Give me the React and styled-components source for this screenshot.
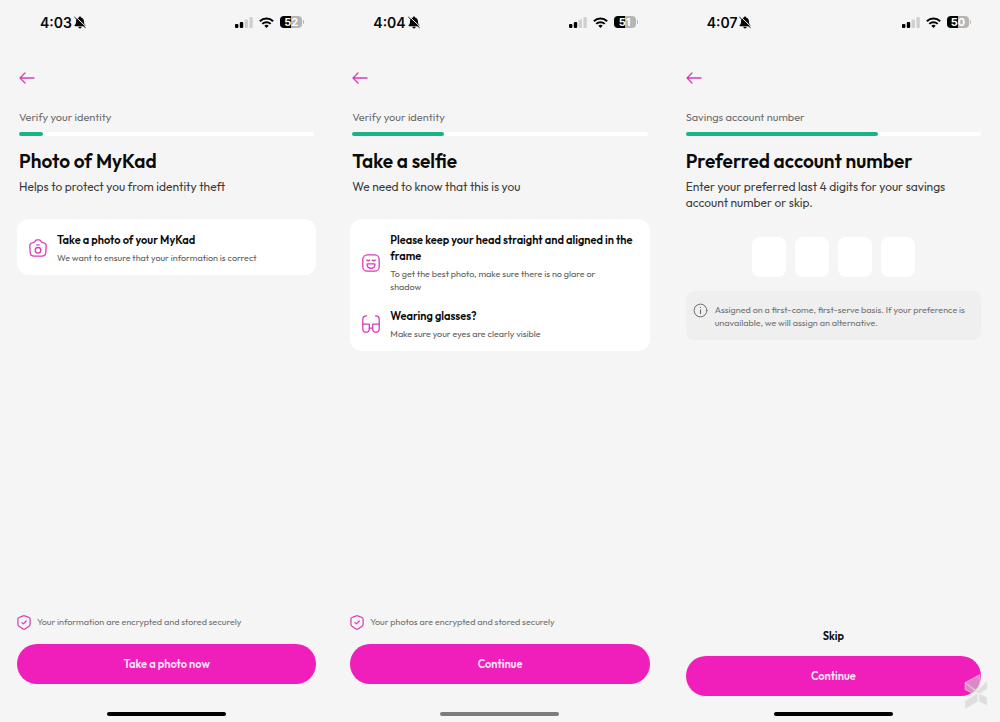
import React from 'react';
import styled, { createGlobalStyle } from 'styled-components';

const GlobalStyle = createGlobalStyle`
  * {
    box-sizing: border-box;
  }

  body {
    margin: 0;
    background: #f5f5f5;
    color: #0a0a0a;
    font-family: Outfit, Lato, sans-serif;
  }

  h1, h2, p {
    margin: 0;
  }

  button {
    font-family: inherit;
    border: 0;
    cursor: pointer;
  }
`;

const Screens = styled.main`
  position: relative;
  display: grid;
  grid-template-columns: repeat(3, 1fr);
  min-height: 100vh;

  @media (max-width: 720px) {
    grid-template-columns: 1fr;
  }
`;

const Screen = styled.section`
  display: flex;
  flex-direction: column;
  min-height: 100vh;
  padding: 0 19px 6px;
`;

const StatusBar = styled.div`
  display: flex;
  align-items: center;
  justify-content: space-between;
  height: 44px;
  padding: 0 10px 0 21px;
`;

const StatusGroup = styled.div`
  display: flex;
  align-items: center;
  gap: ${({ $gap }) => $gap};
`;

const Time = styled.span`
  font-family: Inter, sans-serif;
  font-size: 14px;
  font-weight: 600;
`;

const BackButton = styled.button`
  display: flex;
  align-items: center;
  align-self: flex-start;
  height: 24px;
  margin-top: 22px;
  padding: 0;
  background: none;
  color: #d63cb8;
`;

const StepLabel = styled.p`
  margin-top: 19px;
  font-size: 11px;
  line-height: 16px;
  color: #6f6f6f;
`;

const Track = styled.div`
  height: 4px;
  margin-top: 7px;
  border-radius: 2px;
  background: #fff;
`;

const Fill = styled.div`
  height: 100%;
  border-radius: 2px;
  background: #1bb287;
`;

const Title = styled.h1`
  margin-top: 13px;
  font-size: 19px;
  line-height: 24px;
  font-weight: 600;
`;

const Subtitle = styled.p`
  margin-top: 6px;
  font-size: 12px;
  line-height: 16px;
  color: #3c3c3c;
`;

const Card = styled.div`
  display: flex;
  flex-direction: column;
  gap: 15px;
  margin: 24px -2px 0;
  padding: 13px 12px 11px;
  border-radius: 12px;
  background: #fff;
`;

const Tip = styled.div`
  display: flex;
  align-items: center;
  gap: 10px;
  color: #d63cb8;

  svg {
    flex: none;
  }
`;

const TipTitle = styled.h2`
  font-size: 11px;
  line-height: 16px;
  font-weight: 600;
  color: #0a0a0a;
`;

const TipText = styled.p`
  margin-top: 3px;
  padding-right: 16px;
  font-size: 9px;
  line-height: 13px;
  color: #5a5a5a;
`;

const Digits = styled.div`
  display: flex;
  justify-content: center;
  gap: 9px;
  margin-top: 26px;
`;

const Digit = styled.input`
  width: 34px;
  height: 40px;
  padding: 0;
  border: 0;
  border-radius: 8px;
  background: #fff;
  font: inherit;
  font-size: 20px;
  text-align: center;
`;

const Notice = styled.div`
  display: flex;
  gap: 7px;
  margin-top: 14px;
  padding: 12px 7px 11px;
  border-radius: 8px;
  background: #efefef;
  color: #6f6f6f;

  svg {
    flex: none;
  }
`;

const NoticeText = styled.p`
  font-size: 9px;
  line-height: 13px;
`;

const Footer = styled.footer`
  display: flex;
  flex-direction: column;
  margin: auto ${({ $wide }) => ($wide ? '-2px' : '0')} 0;
`;

const Secure = styled.p`
  display: flex;
  align-items: center;
  gap: 6px;
  margin-bottom: 14px;
  font-size: 9px;
  line-height: 16px;
  color: #6f6f6f;

  svg {
    color: #d63cb8;
  }
`;

const SkipButton = styled.button`
  align-self: center;
  margin-bottom: 12px;
  padding: 0;
  background: none;
  color: #0a0a0a;
  font-size: 11px;
  line-height: 16px;
  font-weight: 600;
`;

const PrimaryButton = styled.button`
  height: 40px;
  margin-bottom: ${({ $low }) => ($low ? '16px' : '28px')};
  border-radius: 20px;
  background: #f01eba;
  color: #ffe6f8;
  font-size: 11px;
  font-weight: 600;
`;

const HomeBar = styled.div`
  align-self: center;
  width: 119px;
  height: 4px;
  border-radius: 2px;
  background: ${({ $dim }) => ($dim ? '#7c7c7c' : '#000')};
`;

const Watermark = styled.svg`
  position: absolute;
  right: 12px;
  bottom: 12px;
`;

const BellOff = () => (
  <svg width="13" height="13" viewBox="0 0 13 13">
    <path d="M6 .6c.7 0 1 .4 1.100 1 1.800.5 2.900 2 2.900 3.800 0 2.100.5 2.800 1.300 3.700.4.5.2 1.100-.4 1.100H1.100c-.6 0-.8-.6-.4-1.100C1.500 8.200 2 7.500 2 5.400c0-1.800 1.100-3.300 2.900-3.800.1-.6.4-1 1.100-1z" fill="#0a0a0a" />
    <path d="M4.300 10.800h3.400c-.2 1-.8 1.600-1.700 1.600s-1.500-.6-1.700-1.600z" fill="#0a0a0a" />
    <path d="M1.500 .7L12.300 11" stroke="#f5f5f5" strokeWidth="1" />
    <path d="M.7 1.300L11.300 11.600" stroke="#0a0a0a" strokeWidth="1" strokeLinecap="round" />
  </svg>
);

const Signal = () => (
  <svg width="18" height="11" viewBox="0 0 18 11">
    <rect x="0" y="7" width="3.400" height="4" rx="1" />
    <rect x="4.800" y="5" width="3.400" height="6" rx="1" />
    <rect x="9.600" y="2.500" width="3.400" height="8.500" rx="1" fill="#d0d0d0" />
    <rect x="14.400" y="0" width="3.400" height="11" rx="1" fill="#d0d0d0" />
  </svg>
);

const Wifi = () => (
  <svg width="15" height="11" viewBox="0 0 15 11" fill="none" stroke="#000" strokeWidth="2">
    <path d="M.9 4.200a9.400 9.400 0 0 1 13.200 0" />
    <path d="M3.300 6.900a6 6 0 0 1 8.400 0" />
    <path d="M7.500 11L5.300 8.800a3.300 3.300 0 0 1 4.400 0z" fill="#000" stroke="none" />
  </svg>
);

const BatteryShell = styled.span`
  display: flex;
  align-items: center;
  gap: 1px;

  &::after {
    content: '';
    width: 1px;
    height: 4px;
    border-radius: 0 1px 1px 0;
    background: #b5b5b5;
  }
`;

const BatteryBody = styled.span`
  width: 22px;
  height: 12px;
  border-radius: 4px;
  background: linear-gradient(90deg, #000 52%, #b5b5b5 52%);
  color: #fff;
  font-family: Inter, sans-serif;
  font-size: 11px;
  line-height: 12px;
  font-weight: 700;
  text-align: center;
`;

const ArrowLeft = () => (
  <svg width="16" height="12" viewBox="0 0 16 12" fill="none" stroke="currentColor" strokeWidth="1.300" strokeLinecap="round" strokeLinejoin="round">
    <path d="M15 6H1M6 1L1 6l5 5" />
  </svg>
);

const CameraIcon = () => (
  <svg width="18" height="18" viewBox="0 0 18 18" fill="none" stroke="currentColor" strokeWidth="1.300" strokeLinecap="round" strokeLinejoin="round">
    <path d="M4.300 3.700c.9 0 1.300-.4 1.600-1.100C6.300 1.500 6.900.9 8 .9h2c1.100 0 1.700.6 2.100 1.700.3.700.7 1.100 1.600 1.100 2.100.2 3.500 1.400 3.500 3.300l-.4 6.500c-.2 2.400-1.200 3.600-3.600 3.600H4.800c-2.400 0-3.400-1.200-3.600-3.600L.8 7c0-1.900 1.400-3.100 3.500-3.300z" />
    <circle cx="9" cy="11.300" r="2.800" />
    <path d="M7.800 5.800h2.400" />
  </svg>
);

const SmileIcon = () => (
  <svg width="18" height="18" viewBox="0 0 18 18" fill="none" stroke="currentColor" strokeWidth="1.300" strokeLinecap="round" strokeLinejoin="round">
    <rect x=".8" y=".8" width="16.400" height="16.400" rx="4.500" />
    <path d="M5.800 9.800h6.400c.5 0 .8.300.8.800 0 2.200-1.600 3.700-4 3.700s-4-1.500-4-3.700c0-.5.300-.8.800-.8z" />
    <path d="M4.600 6.100c.9.800 2.200.8 3.100 0M10.300 6.100c.9.800 2.200.8 3.100 0" />
  </svg>
);

const GlassesIcon = () => (
  <svg width="18" height="18" viewBox="0 0 18 18" fill="none" stroke="currentColor" strokeWidth="1.300" strokeLinecap="round" strokeLinejoin="round">
    <path d="M.8 9.200h6.500v4.500c0 2.300-1 3.500-3.300 3.500S.8 16 .8 13.700zM10.700 9.200h6.500v4.500c0 2.300-1 3.500-3.300 3.500s-3.200-1.200-3.200-3.500z" />
    <path d="M7.300 13.200h3.400M.8 9.200V4.500C.8 2.300 2 .8 4.600.8M17.200 9.200V4.500c0-2.200-1.200-3.700-3.800-3.700" />
  </svg>
);

const ShieldIcon = () => (
  <svg width="14" height="15" viewBox="0 0 14 15" fill="none" stroke="currentColor" strokeWidth="1.200" strokeLinecap="round" strokeLinejoin="round">
    <path d="M6.200.9L2 2.500C1.200 2.800.9 3.300.9 4.100v5c0 .9.4 1.600 1.100 2.100l4 2.700c.6.400 1.400.4 2 0l4-2.700c.7-.5 1.100-1.200 1.100-2.100v-5c0-.8-.3-1.300-1.100-1.600L7.800.9c-.5-.2-1.100-.2-1.600 0z" />
    <path d="M4.900 7.600l1.400 1.300 2.900-2.900" />
  </svg>
);

const InfoIcon = () => (
  <svg width="15" height="15" viewBox="0 0 15 15" fill="none" stroke="currentColor" strokeLinecap="round">
    <circle cx="7.500" cy="7.500" r="6.400" />
    <path d="M7.500 6.700v3.900M7.500 4.300v.2" strokeWidth="1.100" />
  </svg>
);

const Frame = ({ time, battery, step, progress, title, subtitle, children }) => (
  <>
    <StatusBar>
      <StatusGroup $gap="2px">
        <Time>{time}</Time>
        <BellOff />
      </StatusGroup>
      <StatusGroup $gap="6px">
        <Signal />
        <Wifi />
        <BatteryShell>
          <BatteryBody>{battery}</BatteryBody>
        </BatteryShell>
      </StatusGroup>
    </StatusBar>
    <BackButton aria-label="Back">
      <ArrowLeft />
    </BackButton>
    <StepLabel>{step}</StepLabel>
    <Track role="progressbar" aria-label={step} aria-valuenow={progress}>
      <Fill style={{ width: `${progress}%` }} />
    </Track>
    <Title>{title}</Title>
    <Subtitle>{subtitle}</Subtitle>
    {children}
  </>
);

const TipRow = ({ icon, title, text }) => (
  <Tip>
    {icon}
    <div>
      <TipTitle>{title}</TipTitle>
      <TipText>{text}</TipText>
    </div>
  </Tip>
);

const App = () => {
  return (
    <>
      <GlobalStyle />
      <Screens>
        <Screen>
          <Frame
            time="4:03"
            battery="52"
            step="Verify your identity"
            progress={8}
            title="Photo of MyKad"
            subtitle="Helps to protect you from identity theft"
          >
            <Card>
              <TipRow
                icon={<CameraIcon />}
                title="Take a photo of your MyKad"
                text="We want to ensure that your information is correct"
              />
            </Card>
          </Frame>
          <Footer $wide>
            <Secure>
              <ShieldIcon />
              Your information are encrypted and stored securely
            </Secure>
            <PrimaryButton>Take a photo now</PrimaryButton>
            <HomeBar />
          </Footer>
        </Screen>

        <Screen>
          <Frame
            time="4:04"
            battery="51"
            step="Verify your identity"
            progress={31}
            title="Take a selfie"
            subtitle="We need to know that this is you"
          >
            <Card>
              <TipRow
                icon={<SmileIcon />}
                title="Please keep your head straight and aligned in the frame"
                text="To get the best photo, make sure there is no glare or shadow"
              />
              <TipRow
                icon={<GlassesIcon />}
                title="Wearing glasses?"
                text="Make sure your eyes are clearly visible"
              />
            </Card>
          </Frame>
          <Footer $wide>
            <Secure>
              <ShieldIcon />
              Your photos are encrypted and stored securely
            </Secure>
            <PrimaryButton>Continue</PrimaryButton>
            <HomeBar $dim />
          </Footer>
        </Screen>

        <Screen>
          <Frame
            time="4:07"
            battery="50"
            step="Savings account number"
            progress={65}
            title="Preferred account number"
            subtitle="Enter your preferred last 4 digits for your savings account number or skip."
          >
            <Digits>
              {[1, 2, 3, 4].map((n) => (
                <Digit key={n} inputMode="numeric" maxLength={1} aria-label={`Digit ${n}`} />
              ))}
            </Digits>
            <Notice>
              <InfoIcon />
              <NoticeText>
                Assigned on a first-come, first-serve basis. If your preference is unavailable, we will assign an alternative.
              </NoticeText>
            </Notice>
          </Frame>
          <Footer>
            <SkipButton>Skip</SkipButton>
            <PrimaryButton $low>Continue</PrimaryButton>
            <HomeBar />
          </Footer>
        </Screen>

        <Watermark width="24" height="36" viewBox="0 0 24 36" fill="#cfcfcf" fillOpacity=".6" stroke="#ececec" strokeOpacity=".6" strokeWidth=".8">
          <path d="M1 8.500L16 .5v12L9.500 20 1 15.500z" />
          <path d="M1 8.500l12 8.500L23 7v8l-8 4.500L9.500 17" />
          <path d="M1 27l12.500-7.500v8L1 35z" />
          <path d="M15 19.500l8 4v8l-8-4z" />
        </Watermark>
      </Screens>
    </>
  );
};

export default App;
